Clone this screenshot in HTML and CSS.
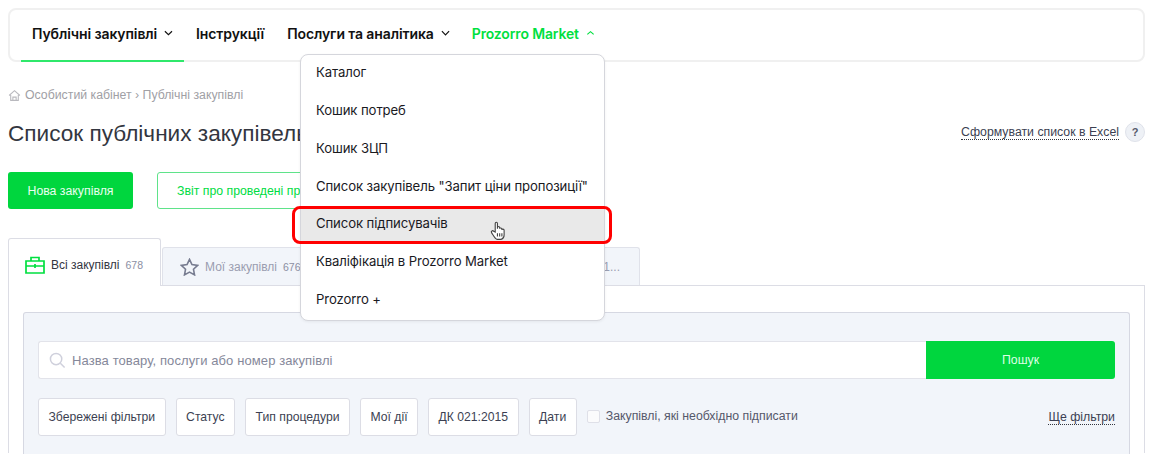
FILE: index.html
```html
<!DOCTYPE html>
<html lang="uk">
<head>
<meta charset="utf-8">
<title>Список публічних закупівель</title>
<link rel="stylesheet" href="styles.css">
</head>
<body>
<div class="page">
  <nav class="nav">
    <a class="nav-item active">Публічні закупівлі <svg class="chev" viewBox="0 0 10 6"><path d="M1 1l4 4 4-4"/></svg></a>
    <a class="nav-item second">Інструкції</a>
    <a class="nav-item">Послуги та аналітика <svg class="chev" viewBox="0 0 10 6"><path d="M1 1l4 4 4-4"/></svg></a>
    <a class="nav-item market">Prozorro Market <svg class="chev up" viewBox="0 0 10 6"><path d="M1.500 4.500l3.500-3 3.500 3"/></svg></a>
  </nav>

  <div class="crumbs">
    <svg class="home" viewBox="0 0 12 12"><path d="M1 6l5-4.500 5 4.500M2.500 5.500v5h7v-5M4.500 10.500v-3h3v3"/></svg>
    <span>Особистий кабінет › Публічні закупівлі</span>
  </div>

  <div class="title-row">
    <h1>Список публічних закупівель</h1>
    <div class="excel"><a class="dotted">Сформувати список в Excel</a><span class="help">?</span></div>
  </div>

  <div class="actions">
    <a class="btn primary">Нова закупівля</a>
    <a class="btn outline">Звіт про проведені процедури</a>
  </div>

  <div class="tabs">
    <div class="tab current">
      <svg class="tab-icon" viewBox="0 0 20 18"><path d="M1 5h18v12H1zM1 10h18M6 5V1.500h8V5M10 8v4M8 10h4"/></svg>
      <span>Всі закупівлі</span> <small>678</small>
    </div>
    <div class="tab other">
      <svg class="tab-icon star" viewBox="0 0 20 19"><path d="M10 1.500l2.600 5.500 6 .8-4.400 4.100 1.100 5.900-5.300-2.900-5.300 2.900 1.100-5.900L1.400 7.800l6-.8z"/></svg>
      <span>Мої закупівлі</span> <small>676</small>
      <span class="tab-rest">1...</span>
    </div>
  </div>

  <section class="content">
    <div class="filters">
      <div class="search">
        <div class="search-field">
          <svg class="lens" viewBox="0 0 18 18"><circle cx="7.500" cy="7.500" r="6"/><path d="M12 12l4.500 4.500"/></svg>
          <span>Назва товару, послуги або номер закупівлі</span>
        </div>
        <a class="search-btn">Пошук</a>
      </div>
      <div class="filter-row">
        <a class="chip">Збережені фільтри</a>
        <a class="chip">Статус</a>
        <a class="chip">Тип процедури</a>
        <a class="chip">Мої дії</a>
        <a class="chip">ДК 021:2015</a>
        <a class="chip">Дати</a>
        <label class="check"><i class="box"></i>Закупівлі, які необхідно підписати</label>
        <a class="dotted more">Ще фільтри</a>
      </div>
    </div>
  </section>

  <div class="menu">
    <a class="menu-item">Каталог</a>
    <a class="menu-item">Кошик потреб</a>
    <a class="menu-item">Кошик ЗЦП</a>
    <a class="menu-item">Список закупівель "Запит ціни пропозиції"</a>
    <a class="menu-item hover">Список підписувачів</a>
    <a class="menu-item">Кваліфікація в Prozorro Market</a>
    <a class="menu-item">Prozorro +</a>
  </div>
  <div class="ring"></div>
  <svg class="cursor" viewBox="0 0 14 18"><path d="M4.500 10V2.200c0-1.500 2-1.500 2 0V7l0-1.200c0-1.200 2-1.200 2 0V7c0-1 2-1 2 .2V8c0-1 2-1 2 .3v4.200c0 2-1.200 3.500-2.500 4H6c-1.500-.5-2.500-2.500-4.800-6-.8-1.400 1-2.400 2-1.200z"/><path d="M6.500 11v3M8.500 11v3M10.500 11v3"/></svg>
</div>
</body>
</html>
```
FILE: styles.css
```css
* { box-sizing: border-box; }
html, body { margin: 0; background: #fff; }
body { font-family: "Liberation Sans", Arial, sans-serif; color: #33363f; height: 469px; overflow: hidden; }
.page { position: relative; height: 454px; margin: 0 11px 0 8px; padding-top: 8px; overflow: hidden; }
a { text-decoration: none; color: inherit; }

.nav { display: flex; height: 54px; border: 2px solid #f0f0f0; border-radius: 8px; padding-left: 11px; }
.nav-item { display: flex; align-items: center; gap: 7px; height: 52px; padding: 0 11px 6px; font: 600 14px "Inter", sans-serif; letter-spacing: -.1px; color: #111; white-space: nowrap; }
.nav-item.active { border-bottom: 2px solid #2fe86b; padding-bottom: 4px; width: 163px; margin-right: 1px; }
.nav-item.second { margin-right: 1px; }
.nav-item.market { color: #00e03f; letter-spacing: -.15px; }
.chev { width: 9px; height: 6px; fill: none; stroke: currentColor; stroke-width: 1.300; }

.crumbs { display: flex; align-items: center; gap: 4px; margin-top: 26px; height: 14px; font-size: 12.300px; color: #a0a0a5; }
.home { width: 13px; height: 13px; fill: none; stroke: #b9b9be; stroke-width: 1; }

.title-row { display: flex; align-items: center; justify-content: space-between; margin-top: 18px; height: 28px; }
h1 { margin: 0; font-weight: 400; font-size: 22.600px; color: #33363f; }
.excel { display: flex; align-items: center; gap: 6px; font-size: 12.300px; padding-bottom: 4px; }
.dotted { border-bottom: 1px dotted #33363f; color: #3c3f52; line-height: 14px; }
.help { width: 20px; height: 20px; border-radius: 50%; background: #eef1f6; border: 1px solid #dfe2ea; color: #555a6a; font: 700 11px/18px "Liberation Sans", sans-serif; text-align: center; }

.actions { display: flex; gap: 24px; margin-top: 24px; }
.btn { display: flex; align-items: center; justify-content: center; height: 37px; border-radius: 3px; font-size: 12.300px; white-space: nowrap; }
.primary { width: 125px; background: #00d63e; color: #e9fff0; }
.outline { padding: 0 19px; border: 1px solid #5fe38a; color: #00dc42; }

.tabs { display: flex; margin-top: 29px; height: 47px; gap: 1px; align-items: flex-end; position: relative; }
.tab { display: flex; align-items: center; font-size: 12px; white-space: nowrap; border-radius: 3px 3px 0 0; gap: 4px; }
.tab small { font-size: 10.500px; color: #8c8fa3; margin-left: 2px; }
.tab.current { width: 153px; height: 48px; padding: 4px 0 0 16px; background: #fff; border: 1px solid #dcdde5; border-bottom: 0; position: relative; z-index: 1; margin-bottom: -1px; }
.tab.other { width: 478px; height: 38px; padding: 0 0 0 17px; background: #f2f5fa; border: 1px solid #e0e2ea; border-bottom: 0; color: #9a9db0; }
.tab-rest { margin-left: auto; padding-right: 19px; }
.tab-icon { width: 20px; height: 18px; fill: none; stroke: #00e040; stroke-width: 1.700; margin-right: 2px; flex: none; }
.tab-icon.star { stroke: #777c90; width: 19px; }

.content { border: 1px solid #dcdde5; border-bottom: 0; padding: 26px 14px 0; height: 168px; }
.filters { background: #f2f5fa; border: 1px solid #d6d8e2; border-bottom: 0; border-radius: 3px 3px 0 0; height: 142px; padding: 28px 14px 0; }
.search { display: flex; height: 38px; }
.search-field { flex: 1; display: flex; align-items: center; gap: 6px; padding-left: 10px; background: #fff; border: 1px solid #e2e3ea; border-right: 0; border-radius: 3px 0 0 3px; font-size: 13px; color: #85889a; letter-spacing: .1px; }
.lens { width: 17px; height: 17px; fill: none; stroke: #cfd0dc; stroke-width: 1.600; }
.search-btn { width: 189px; display: flex; align-items: center; justify-content: center; background: #00d63e; color: #dcffe6; font-size: 12.300px; border-radius: 0 3px 3px 0; }
.filter-row { display: flex; align-items: center; gap: 10px; margin-top: 19px; }
.chip { height: 38px; display: flex; align-items: center; padding: 0 9.500px; background: #fff; border: 1px solid #dcdde5; border-radius: 3px; font-size: 12.200px; color: #3c3f52; white-space: nowrap; }
.check { display: flex; align-items: center; gap: 6px; font-size: 12.300px; color: #55586a; margin-right: auto; position: relative; bottom: 1px; }
.box { width: 13px; height: 13px; background: #fbfbfc; border: 1px solid #dfe0e8; border-radius: 2px; }
.more { font-size: 12.300px; }

.menu { position: absolute; left: 292px; top: 54px; width: 305px; height: 267px; display: flex; flex-direction: column; background: #fff; border: 1px solid #d5d6dc; border-radius: 8px; box-shadow: 0 1px 3px rgba(0,0,0,.06); z-index: 3; }
.menu-item { display: flex; align-items: center; height: 38px; padding: 0 0 4px 15px; font: 400 13.150px "Inter", sans-serif; letter-spacing: -.1px; color: #1a1a1f; white-space: nowrap; }
.menu-item.hover { background: #e9e9e9; }
.ring { position: absolute; left: 284px; top: 206px; width: 320px; height: 38px; border: 3px solid #ff0000; border-radius: 8px; z-index: 4; }
.cursor { position: absolute; left: 482px; top: 221px; width: 16px; height: 20px; fill: #fff; stroke: #444; stroke-width: 1; z-index: 5; }
```
